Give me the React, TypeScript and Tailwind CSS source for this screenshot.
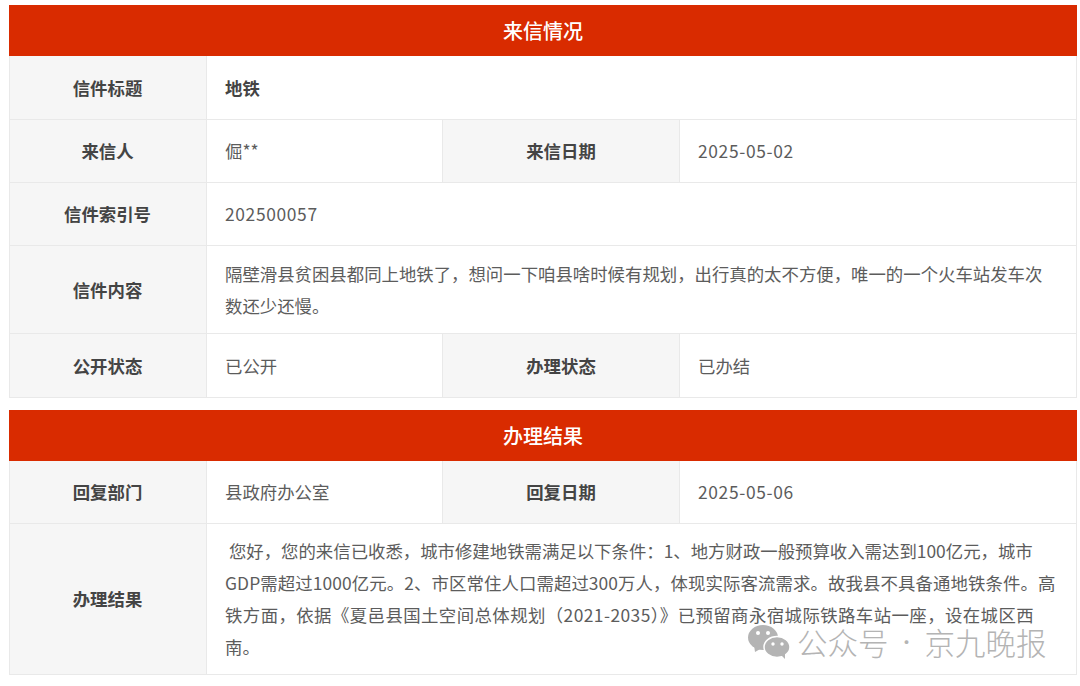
import type { ReactNode } from 'react';

const cjk = "font-['Noto_Sans_CJK_SC','Noto_Sans',sans-serif]";

function Label({ children, className = '' }: { children: ReactNode; className?: string }) {
  return (
    <div className={`flex items-center justify-center bg-[#f6f6f6] font-bold text-[#444] ${className}`}>
      {children}
    </div>
  );
}

function Value({ children, className = '' }: { children: ReactNode; className?: string }) {
  return <div className={`flex items-center px-[18px] text-[#5c5c5c] ${className}`}>{children}</div>;
}

function Row({ height, children }: { height: string; children: ReactNode }) {
  return <div className={`flex border-b border-[#e9e9e9] ${height}`}>{children}</div>;
}

function Header({ title }: { title: string }) {
  return (
    <div className="-mx-px flex h-[51px] items-center justify-center bg-[#d92b00] text-[20px] font-medium text-white">
      {title}
    </div>
  );
}

function Num({ children }: { children: ReactNode }) {
  return <span className="tracking-[0.65px]">{children}</span>;
}

function Pair({ a, b, c, d, height }: { a: string; b: string; c: string; d: ReactNode; height: string }) {
  return (
    <Row height={height}>
      <Label className="w-[197px] border-r border-[#e9e9e9] pr-px">{a}</Label>
      <Value className="w-[236px] border-r border-[#e9e9e9]">{b}</Value>
      <Label className="w-[237px] border-r border-[#e9e9e9]">{c}</Label>
      <Value className="flex-1">{d}</Value>
    </Row>
  );
}

function Single({ label, height, bold, children }: { label: string; height: string; bold?: boolean; children: ReactNode }) {
  return (
    <Row height={height}>
      <Label className="w-[197px] border-r border-[#e9e9e9] pr-px">{label}</Label>
      <Value className={`flex-1 ${bold ? 'font-bold text-[#444]' : ''}`}>{children}</Value>
    </Row>
  );
}

export default function App() {
  return (
    <div className={`relative h-[686px] w-[1080px] overflow-hidden bg-white pt-[5px] pr-[3px] pl-[9px] text-[17.4px] leading-[32px] ${cjk}`}>
      <section className="border-x border-[#e9e9e9]">
        <Header title="来信情况" />
        <Single label="信件标题" height="h-[64px]" bold>地铁</Single>
        <Pair a="来信人" b="倔**" c="来信日期" d={<Num>2025-05-02</Num>} height="h-[63px]" />
        <Single label="信件索引号" height="h-[63px]"><Num>202500057</Num></Single>
        <Single label="信件内容" height="h-[88px]">
          <p>隔壁滑县贫困县都同上地铁了，想问一下咱县啥时候有规划，出行真的太不方便，唯一的一个火车站发车次数还少还慢。</p>
        </Single>
        <Pair a="公开状态" b="已公开" c="办理状态" d="已办结" height="h-[64px]" />
      </section>

      <section className="mt-[12px] border-x border-[#e9e9e9]">
        <Header title="办理结果" />
        <Pair a="回复部门" b="县政府办公室" c="回复日期" d={<Num>2025-05-06</Num>} height="h-[63px]" />
        <Single label="办理结果" height="h-[151px]">
          <div className="whitespace-nowrap">
            <p>&nbsp;您好，您的来信已收悉，城市修建地铁需满足以下条件：1、地方财政一般预算收入需达到100亿元，城市</p>
            <p className="tracking-[0.1px]">GDP需超过1000亿元。2、市区常住人口需超过300万人，体现实际客流需求。故我县不具备通地铁条件。高</p>
            <p className="tracking-[0.43px]">铁方面，依据《夏邑县国土空间总体规划（2021-2035）》已预留商永宿城际铁路车站一座，设在城区西</p>
            <p>南。</p>
          </div>
        </Single>
      </section>

      <div className="absolute top-[624px] left-[748px] flex items-center text-[30.5px] leading-[36px] font-light text-[#b4b4b4]">
        <svg className="mr-[7px]" width="42" height="34" viewBox="0 0 42 34" fill="#b4b4b4">
          <ellipse cx="15" cy="12.5" rx="15" ry="12.5" />
          <path d="M6 20l1 7 7-4z" />
          <ellipse cx="29" cy="22" rx="13" ry="10.5" stroke="#fff" strokeWidth="1.5" />
          <path d="M33 30l4 4 0-6z" />
          <circle cx="10" cy="8" r="2" fill="#fff" />
          <circle cx="20" cy="8" r="2" fill="#fff" />
          <circle cx="25" cy="19" r="1.7" fill="#fff" />
          <circle cx="34" cy="19" r="1.7" fill="#fff" />
        </svg>
        <span>公众号</span>
        <span className="mx-[8px] text-[20px]">·</span>
        <span>京九晚报</span>
      </div>
    </div>
  );
}
